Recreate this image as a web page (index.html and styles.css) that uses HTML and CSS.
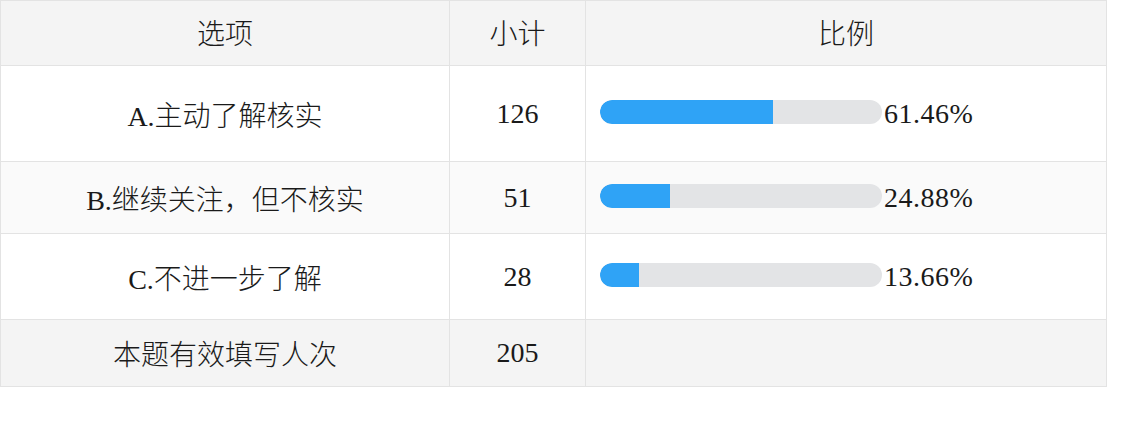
FILE: index.html
```html
<!DOCTYPE html>
<html lang="zh-CN">
<head>
<meta charset="utf-8">
<title>统计</title>
<link rel="stylesheet" href="styles.css">
</head>
<body>
<table class="stats">
  <colgroup>
    <col class="c-opt">
    <col class="c-cnt">
    <col class="c-pct">
  </colgroup>
  <thead>
    <tr class="head">
      <th>选项</th>
      <th>小计</th>
      <th>比例</th>
    </tr>
  </thead>
  <tbody>
    <tr class="r1">
      <td>A.主动了解核实</td>
      <td>126</td>
      <td class="pct"><div class="pwrap"><div class="bar"><div class="fill" style="width:61.46%"></div></div><span class="num">61.46%</span></div></td>
    </tr>
    <tr class="r2 alt">
      <td>B.继续关注，但不核实</td>
      <td>51</td>
      <td class="pct"><div class="pwrap"><div class="bar"><div class="fill" style="width:24.88%"></div></div><span class="num">24.88%</span></div></td>
    </tr>
    <tr class="r3">
      <td>C.不进一步了解</td>
      <td>28</td>
      <td class="pct"><div class="pwrap"><div class="bar"><div class="fill" style="width:13.66%"></div></div><span class="num">13.66%</span></div></td>
    </tr>
    <tr class="total">
      <td>本题有效填写人次</td>
      <td>205</td>
      <td></td>
    </tr>
  </tbody>
</table>
</body>
</html>
```
FILE: styles.css
```css
html, body {
  margin: 0;
  padding: 0;
  background: #ffffff;
}
body {
  font-family: "Liberation Serif", "Noto Sans CJK SC", serif;
  font-size: 28px;
  font-weight: 300;
  color: #1a1a1a;
}
.stats {
  border-collapse: collapse;
  width: 1106px;
  table-layout: fixed;
}
.c-opt { width: 449px; }
.c-cnt { width: 136px; }
.c-pct { width: 521px; }
.stats th,
.stats td {
  border: 1px solid #e3e3e3;
  text-align: center;
  vertical-align: middle;
  padding: 0;
  font-weight: 300;
}
.head { height: 65px; background: #f4f4f4; }
.head th { padding-bottom: 2px; }
.r1 { height: 96px; }
.r2 { height: 72px; }
.r3 { height: 86px; }
.total { height: 67px; background: #f4f4f4; }
.alt { background: #fafafa; }
.stats td.pct {
  text-align: left;
  padding-left: 14px;
}
.pwrap {
  display: flex;
  align-items: center;
  gap: 2px;
}
.bar {
  width: 282px;
  height: 24px;
  background: #e3e4e6;
  border-radius: 12px;
  overflow: hidden;
  margin-top: -3px;
}
.fill {
  height: 100%;
  background: #2fa3f6;
  border-radius: 12px 0 0 12px;
}
.num {
  line-height: 1;
  letter-spacing: 0.5px;
}
```
